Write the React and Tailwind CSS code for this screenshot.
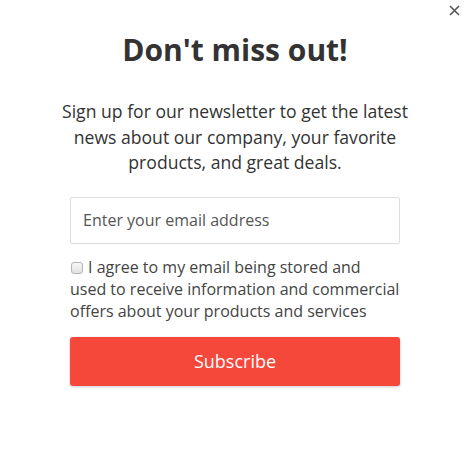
import React from "react";

export default function App() {
  return (
    <div className="relative w-[470px] h-[451px] bg-white">
      <div className="relative flex flex-col items-center font-['Open_Sans',sans-serif] w-full h-full">
        <button className="absolute right-[10px] top-[4px] w-[12px] h-[12px] flex items-center justify-center text-[#555]">
          <svg width="11" height="11" viewBox="0 0 11 11">
            <path d="M1 1L10 10M10 1L1 10" stroke="#555" strokeWidth="1.6" fill="none" />
          </svg>
        </button>
        <h1 className="mt-[30px] text-[30px] leading-[40px] font-bold text-[#333]">
          Don't miss out!
        </h1>
        <p className="mt-[29px] w-[360px] text-center text-[17.6px] leading-[25.5px] text-[#333]">
          Sign up for our newsletter to get the latest news about our company, your favorite products, and great deals.
        </p>
        <div className="mt-[21px] w-[330px] flex flex-col">
          <input
            type="email"
            placeholder="Enter your email address"
            className="h-[47px] w-full border border-[#ddd] rounded-[2px] px-[12px] text-[16px] text-[#555] placeholder:text-[#555] outline-none"
          />
          <label className="mt-[12px] text-[16px] leading-[22px] text-[#444]">
            <input
              type="checkbox"
              className="appearance-none inline-block w-[12px] h-[12px] align-[-1px] mr-[5px] ml-[1px] border border-[#b5b5b5] rounded-[3px] bg-gradient-to-b from-[#f7f7f7] to-[#e2e2e2]"
            />
            I agree to my email being stored and used to receive information and commercial offers about your products and services
          </label>
          <button className="mt-[15px] h-[49px] w-full rounded-[3px] bg-[#f5473a] text-white text-[18px] shadow-[0_1px_3px_rgba(0,0,0,0.2)]">
            Subscribe
          </button>
        </div>
      </div>
    </div>
  );
}
